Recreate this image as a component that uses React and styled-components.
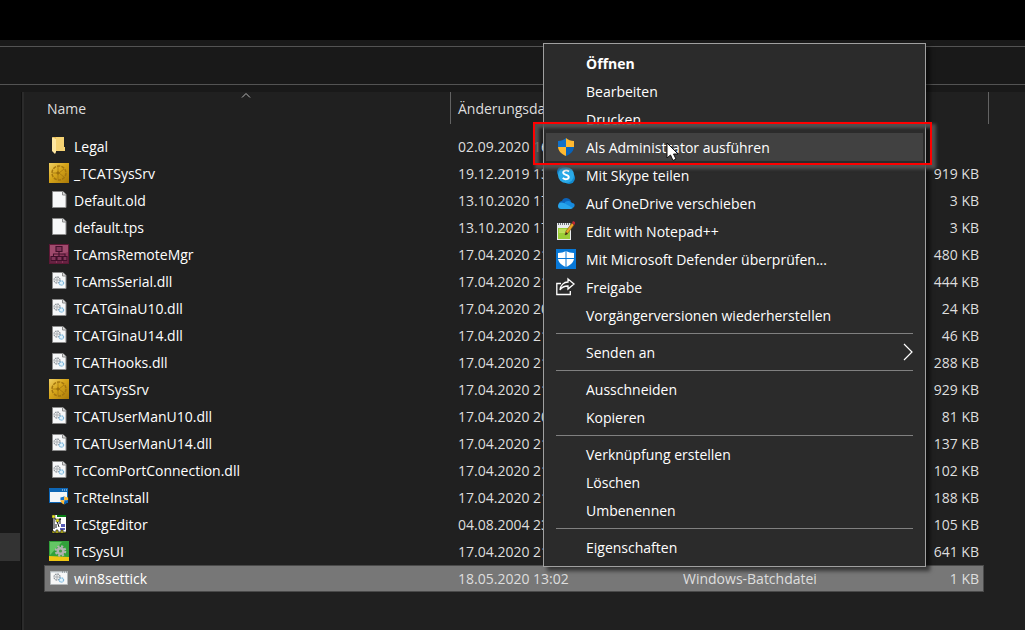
import React from "react";
import styled, { createGlobalStyle, css } from "styled-components";

const GlobalStyle = createGlobalStyle`
  * { box-sizing: border-box; }
  html, body, #root { height: 100%; }
  body {
    margin: 0;
    background: #191919;
    color: #fff;
    font: 14px/20px "Open Sans", "Segoe UI", sans-serif;
    overflow: hidden;
  }
`;

const Window = styled.div`
  position: relative;
  display: flex;
  flex-direction: column;
  min-height: 100%;
`;

const TitleBar = styled.header`
  height: 40px;
  background: #000;
`;

const AddressBar = styled.div`
  height: 39px;
  margin-top: 6px;
  border-top: 1px solid #535353;
  border-bottom: 1px solid #535353;
`;

const Content = styled.div`
  display: flex;
  flex: 1;
  margin-top: 7px;
`;

const NavPane = styled.nav`
  width: 22px;
  padding-top: 441px;
  border-right: 1px solid #101010;
`;

const NavItem = styled.div`
  width: 20px;
  height: 28px;
  background: #333;
`;

const FilePane = styled.main`
  flex: 1;
  min-width: 0;
  padding: 0 36px 0 20px;
  background: #202020;
  border-left: 2px solid #2b2b2b;
`;

const FileTable = styled.table`
  width: 100%;
  table-layout: fixed;
  border-collapse: separate;
  border-spacing: 0;
`;

const HeadCell = styled.th`
  position: relative;
  width: ${(p) => p.$width || "auto"};
  height: 32px;
  padding: 2px 3px 0;
  padding-left: ${(p) => (p.$divided ? "7px" : "3px")};
  font-weight: 400;
  text-align: left;
  white-space: nowrap;
  color: #dedede;
  border-left: ${(p) => (p.$divided ? "1px solid #636363" : "0")};
`;

const HeadEnd = styled.td`
  width: 5px;
  padding: 0;
  border-right: 1px solid #636363;
`;

const SortMark = styled.svg`
  position: absolute;
  top: 0;
  left: 50%;
  margin-left: -6px;
`;

const Spacer = styled.tr`
  height: 9px;
`;

const Cell = styled.td`
  height: 27px;
  padding: 0 5px 0 8px;
  text-align: ${(p) => p.$align || "left"};
  white-space: nowrap;
  color: #dedede;
`;

const EndCell = styled.td`
  padding: 0;
`;

const Row = styled.tr`
  ${(p) =>
    p.$selected &&
    css`
      ${Cell} {
        background: #777;
        border-top: 1px solid #4a4a4a;
        border-bottom: 1px solid #4a4a4a;
      }
      ${Cell}:first-child { border-left: 1px solid #4a4a4a; }
      ${Cell}:nth-last-child(2) {
        border-right: 1px solid #4a4a4a;
        padding-right: 4px;
      }
    `}
`;

const NameCell = styled(Cell)`
  padding-left: ${(p) => (p.$selected ? "4px" : "5px")};
  color: #fff;
`;

const FileName = styled.span`
  display: flex;
  align-items: center;
  gap: 5px;

  svg {
    flex: none;
    margin-bottom: 2px;
  }
`;

const Menu = styled.div`
  position: absolute;
  left: 543px;
  top: 43px;
  width: 383px;
  padding: 5px 2px;
  background: #2b2b2b;
  border: 1px solid #a0a0a0;
  box-shadow: 4px 4px 4px rgba(0, 0, 0, 0.55);
`;

const MenuItem = styled.button`
  display: flex;
  align-items: center;
  gap: 10px;
  width: 100%;
  height: 28px;
  padding: 0 9px 0 10px;
  border: 0;
  background: ${(p) => (p.$active ? "#414141" : "transparent")};
  color: #fff;
  font: inherit;
  font-weight: ${(p) => (p.$bold ? 700 : 400)};
  text-align: left;
`;

const IconSlot = styled.span`
  display: flex;
  flex: none;
  width: 20px;
  height: 20px;
`;

const MenuLabel = styled.span`
  flex: 1;
  padding-top: 2px;
  white-space: nowrap;
`;

const Separator = styled.hr`
  height: 1px;
  margin: 4px 10px;
  border: 0;
  background: #808080;
`;

const Highlight = styled.div`
  position: absolute;
  left: 533px;
  top: 122px;
  width: 399px;
  height: 43px;
  border: 2px solid #f00;
  box-shadow: 3px 3px 3px 1px rgba(84, 84, 84, 0.9), inset 3px 3px 3px 1px rgba(84, 84, 84, 0.9);
  pointer-events: none;
`;

const Pointer = styled.svg`
  position: absolute;
  left: 666px;
  top: 142px;
`;

const Svg = ({ children, ...rest }) => (
  <svg width="20" height="20" viewBox="0 0 20 20" aria-hidden="true" {...rest}>{children}</svg>
);

const Page = () => (
  <>
    <path d="M3.5 1.5h10.500l3 3v13h-13.500z" fill="#f7f8f9" stroke="#8b8b8b" />
    <path d="M13.500 1.500v3.500h3.500" fill="#dedede" stroke="#8b8b8b" />
  </>
);

const Gears = () => (
  <>
    <circle cx="8" cy="9" r="3" fill="none" stroke="#8d9399" strokeWidth="1.300" strokeDasharray="1.600 .75" />
    <circle cx="8" cy="9" r="1.200" fill="none" stroke="#8d9399" strokeWidth=".8" />
    <circle cx="12.400" cy="12" r="2.200" fill="#e2f2fb" stroke="#7fb8dc" strokeWidth="1.200" strokeDasharray="1.400 .5" />
  </>
);

const Shield = () => (
  <>
    <path d="M10 1C8 3 5 4 2 4v6h8z" fill="#1271c9" />
    <path d="M10 1c2 2 5 3 8 3v6h-8z" fill="#ffb931" />
    <path d="M2 10h8v9C5 17 2.400 14 2 10z" fill="#ffb931" />
    <path d="M18 10h-8v9c5-2 7.600-5 8-9z" fill="#0863ba" />
  </>
);

const icons = {
  folder: (
    <Svg>
      <path d="M4 1h11v14H4z" fill="#e9bd57" />
      <path d="M7 1h8v10h1v4H7z" fill="#f6d374" />
      <path d="M3 1l4 2v13l-1 2-3-3z" fill="#ffe7a1" />
    </Svg>
  ),
  gold: (
    <Svg>
      <defs>
        <linearGradient id="gold" x1="0" y1="0" x2="1" y2="1">
          <stop offset="0" stopColor="#f0cf62" />
          <stop offset=".45" stopColor="#d6a51a" />
          <stop offset="1" stopColor="#a87808" />
        </linearGradient>
      </defs>
      <path d="M0 0h20v20H0z" fill="url(#gold)" />
      <g fill="none" stroke="#a4760f">
        <circle cx="10" cy="10" r="7" strokeWidth="1.500" strokeDasharray="3.300 1.098" />
        <path d="M9 3.500v13M3.500 10h6M10 10l5-4M10 10l5 4" strokeWidth=".8" />
        <circle cx="9" cy="10" r="1.200" fill="#8d640a" />
      </g>
    </Svg>
  ),
  page: <Svg><Page /></Svg>,
  dll: <Svg><Page /><Gears /></Svg>,
  remote: (
    <Svg>
      <path d="M0 0h20v20H0z" fill="#5e1836" />
      <path d="M1 1h18v18H1z" fill="#8c365b" />
      <path d="M1 1h18v7L1 14z" fill="#a04a6d" />
      <g fill="#82365a" stroke="#40102a" strokeWidth="1.100">
        <path d="M7 2.500h6v5H7zM2 12.500h5v4H2zM8 12.500h5v4H8zM14 12.500h4v4h-4z" />
        <path d="M10 7.500v5M4.500 12.500v-2.500h11.500v2.500M1 18h6M8 18h5M14 18h5" fill="none" />
      </g>
    </Svg>
  ),
  install: (
    <Svg>
      <path d="M0 1h19v15H0z" fill="#0e66b5" />
      <path d="M1 5h17v10H1z" fill="#f4f6f8" />
      <path d="M13 3h1M15 3h1M17 3h1" stroke="#cde6fb" />
      <g transform="translate(10.500 8.500) scale(.48)"><Shield /></g>
    </Svg>
  ),
  editor: (
    <Svg>
      <path d="M4 1h13v17H4z" fill="#fff" />
      <path d="M8 1h9v2H8z" fill="#087d15" />
      <path d="M5 3l3 4 4-2M5 3v12M8 7l2 6" fill="none" stroke="#111" />
      <path d="M3 1h3v3H3zM7 5h3v3H7z" fill="#f0ee18" stroke="#333" strokeWidth=".5" />
      <path d="M12 10h4v3h-4zM11 14h5v2h-5z" fill="#565bb7" />
      <path d="M3 17h2v1h2v-2h2v2h3v-2h2v2h3v1H3z" fill="#e6df20" stroke="#111" strokeWidth=".7" />
      <path d="M11 4v6M7 10v4" stroke="#111" />
    </Svg>
  ),
  system: (
    <Svg>
      <path d="M0 0h20v20H0z" fill="#31a13a" />
      <path d="M1 1h12L1 14z" fill="#64c665" />
      <path d="M0 15l20 1v4H0z" fill="#eec613" />
      <circle cx="11.500" cy="10" r="4" fill="#b2b4b2" />
      <circle cx="11.500" cy="10" r="4.800" fill="none" stroke="#b2b4b2" strokeWidth="2" strokeDasharray="2.200 1.570" />
      <circle cx="11.500" cy="10" r="1.600" fill="#4c9c50" />
    </Svg>
  ),
  batch: (
    <Svg>
      <path d="M1.500 3.500h17v13h-17z" fill="#f7f7f7" stroke="#b4b8ba" />
      <path d="M2 4h16v1H2z" fill="#dce2e6" />
      <path d="M13 4h1M15 4h1M17 4h1" stroke="#6d7479" />
      <Gears />
    </Svg>
  ),
  shield: <Svg><Shield /></Svg>,
  skype: (
    <Svg>
      <circle cx="7" cy="7" r="6" fill="#1178c2" />
      <circle cx="13" cy="13" r="6" fill="#138bd0" />
      <circle cx="10" cy="10" r="8" fill="#2aaae8" />
      <path d="M13 6.500C10.500 4.500 7 5.500 7.200 7.900c.2 2.200 5.600 1.600 5.600 4.100 0 2.500-4 2.900-6 .9" fill="none" stroke="#fff" strokeWidth="1.900" />
    </Svg>
  ),
  onedrive: (
    <Svg>
      <path d="M3 12C2 9 5 8 6 8c1-4 7-4 9 0l-7 7z" fill="#0d63b8" />
      <path d="M9 9c3-2 6-1 7 1 4 0 3 5 0 5H7z" fill="#168be0" />
      <path d="M2 13c0-4 4-4 6-3l9 5c-1 1-3 1-4 1H5c-2 0-3-1-3-3z" fill="#28a5ec" />
    </Svg>
  ),
  notepad: (
    <Svg>
      <path d="M1 2h14v17H1z" fill="#e9ecee" />
      <path d="M2 7h12v11H2z" fill="#9bce38" />
      <path d="M3 9h10M3 11h9" stroke="#d9ef7b" />
      <path d="M2 3h13" stroke="#6c7378" strokeWidth="2" strokeDasharray="1 1" />
      <path d="M9 14l1-4 6-8 2 2-6 8z" fill="#eca526" stroke="#765017" strokeWidth=".6" />
      <path d="M16 2l1-2 2 1v2l-1 1z" fill="#bd2432" />
      <path d="M9 14l1-3 2 2z" fill="#34281b" />
    </Svg>
  ),
  defender: (
    <Svg>
      <path d="M0 0h20v20H0z" fill="#0878d7" />
      <path d="M10 2c2 1 5 2 8 2v5c0 4-3 7-8 9-5-2-8-5-8-9V4c3 0 6-1 8-2z" fill="#fff" />
      <path d="M10 2v16M2 9.500h16" stroke="#0878d7" strokeWidth="1" />
    </Svg>
  ),
  share: (
    <Svg fill="none" stroke="#fff" strokeWidth="1.300">
      <path d="M5 6.500H.800v11h13.500v-3.500" />
      <path d="M12 2l6 5-6 5V9c-4 0-6.500 1.500-8 4 .5-5 4-8 8-8z" />
    </Svg>
  ),
};

const files = [
  ["folder", "Legal", "02.09.2020 16:11", ""],
  ["gold", "_TCATSysSrv", "19.12.2019 13:22", "919 KB"],
  ["page", "Default.old", "13.10.2020 17:10", "3 KB"],
  ["page", "default.tps", "13.10.2020 17:10", "3 KB"],
  ["remote", "TcAmsRemoteMgr", "17.04.2020 21:10", "480 KB"],
  ["dll", "TcAmsSerial.dll", "17.04.2020 21:10", "444 KB"],
  ["dll", "TCATGinaU10.dll", "17.04.2020 20:10", "24 KB"],
  ["dll", "TCATGinaU14.dll", "17.04.2020 21:10", "46 KB"],
  ["dll", "TCATHooks.dll", "17.04.2020 21:10", "288 KB"],
  ["gold", "TCATSysSrv", "17.04.2020 21:10", "929 KB"],
  ["dll", "TCATUserManU10.dll", "17.04.2020 20:10", "81 KB"],
  ["dll", "TCATUserManU14.dll", "17.04.2020 21:10", "137 KB"],
  ["dll", "TcComPortConnection.dll", "17.04.2020 21:10", "102 KB"],
  ["install", "TcRteInstall", "17.04.2020 21:10", "188 KB"],
  ["editor", "TcStgEditor", "04.08.2004 23:10", "105 KB"],
  ["system", "TcSysUI", "17.04.2020 21:10", "641 KB"],
  ["batch", "win8settick", "18.05.2020 13:02", "1 KB", "Windows-Batchdatei"],
];

const menu = [
  { label: "Öffnen", bold: true },
  { label: "Bearbeiten" },
  { label: "Drucken" },
  { label: "Als Administrator ausführen", icon: "shield", active: true },
  { label: "Mit Skype teilen", icon: "skype" },
  { label: "Auf OneDrive verschieben", icon: "onedrive" },
  { label: "Edit with Notepad++", icon: "notepad" },
  { label: "Mit Microsoft Defender überprüfen...", icon: "defender" },
  { label: "Freigabe", icon: "share" },
  { label: "Vorgängerversionen wiederherstellen" },
  null,
  { label: "Senden an", submenu: true },
  null,
  { label: "Ausschneiden" },
  { label: "Kopieren" },
  null,
  { label: "Verknüpfung erstellen" },
  { label: "Löschen" },
  { label: "Umbenennen" },
  null,
  { label: "Eigenschaften" },
];

export default function App() {
  return (
    <>
      <GlobalStyle />
      <Window>
        <TitleBar />
        <AddressBar />
        <Content>
          <NavPane><NavItem /></NavPane>
          <FilePane>
            <FileTable>
              <thead>
                <tr>
                  <HeadCell $width="406px">
                    Name
                    <SortMark width="10" height="7" viewBox="0 0 10 7" fill="none" stroke="#b5b5b5" aria-hidden="true">
                      <path d="M1 5.500L5 1.500l4 4" />
                    </SortMark>
                  </HeadCell>
                  <HeadCell $width="225px" $divided>Änderungsdatum</HeadCell>
                  <HeadCell $divided>Typ</HeadCell>
                  <HeadCell $width="110px" $divided>Größe</HeadCell>
                  <HeadEnd />
                </tr>
              </thead>
              <tbody>
                <Spacer><EndCell colSpan="5" /></Spacer>
                {files.map(([icon, name, date, size, type]) => {
                  const selected = Boolean(type);
                  return (
                    <Row key={name} $selected={selected}>
                      <NameCell $selected={selected}>
                        <FileName>{icons[icon]}{name}</FileName>
                      </NameCell>
                      <Cell>{date}</Cell>
                      <Cell>{type}</Cell>
                      <Cell $align="right">{size}</Cell>
                      <EndCell />
                    </Row>
                  );
                })}
              </tbody>
            </FileTable>
          </FilePane>
        </Content>

        <Menu role="menu">
          {menu.map((item, i) =>
            item ? (
              <MenuItem key={item.label} type="button" role="menuitem" $active={item.active} $bold={item.bold}>
                <IconSlot>{item.icon && icons[item.icon]}</IconSlot>
                <MenuLabel>{item.label}</MenuLabel>
                {item.submenu && (
                  <svg width="12" height="18" viewBox="0 0 12 18" fill="none" stroke="#fff" strokeWidth="1.200" aria-hidden="true">
                    <path d="M2 1l8 8-8 8" />
                  </svg>
                )}
              </MenuItem>
            ) : (
              <Separator key={i} />
            )
          )}
        </Menu>
        <Highlight />
        <Pointer width="13" height="20" viewBox="0 0 13 20" aria-hidden="true">
          <path d="M1 1v15l3.500-3 2.500 5.500 3-1.500-2.500-5H12z" fill="#fff" stroke="#111" />
        </Pointer>
      </Window>
    </>
  );
}
